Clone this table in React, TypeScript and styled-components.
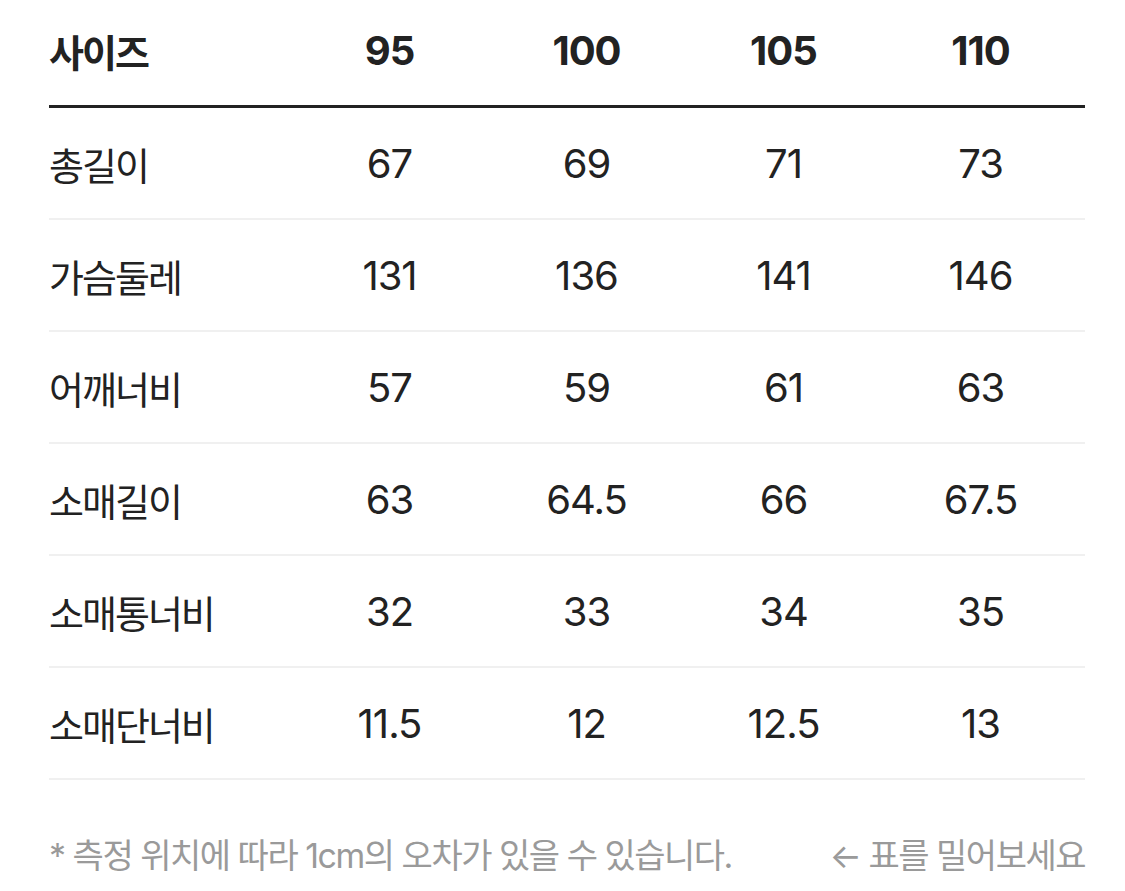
import styled, { createGlobalStyle } from 'styled-components';

const GlobalStyle = createGlobalStyle`
	html, body {
		margin: 0;
		padding: 0;
		background: #ffffff;
	}
	body {
		font-family: Inter, "Noto Sans CJK KR", sans-serif;
		color: #222222;
	}
`;

const SIZES = ['95', '100', '105', '110'];

const ROWS: { label: string; values: string[] }[] = [
	{ label: '총길이', values: ['67', '69', '71', '73'] },
	{ label: '가슴둘레', values: ['131', '136', '141', '146'] },
	{ label: '어깨너비', values: ['57', '59', '61', '63'] },
	{ label: '소매길이', values: ['63', '64.5', '66', '67.5'] },
	{ label: '소매통너비', values: ['32', '33', '34', '35'] },
	{ label: '소매단너비', values: ['11.5', '12', '12.5', '13'] },
];

const StyledSizeTable = styled.div`
	width: 1036px;
	padding: 0 40px 0 49px;
`;

const Row = styled.div<{ $head?: boolean }>`
	display: grid;
	grid-template-columns: 242px repeat(4, 197px);
	align-items: center;
	box-sizing: border-box;
	height: ${(p) => (p.$head ? '108px' : '112px')};
	padding-bottom: ${(p) => (p.$head ? '5px' : '0')};
	border-bottom: ${(p) => (p.$head ? '3px solid #222222' : '2px solid #f0f0f0')};
	font-weight: ${(p) => (p.$head ? 700 : 400)};
`;

const Label = styled.div`
	font-size: 38px;
	letter-spacing: -2px;
	white-space: nowrap;
`;

const Cell = styled.div`
	font-size: 40px;
	letter-spacing: -1px;
	text-align: center;
`;

const Footer = styled.div`
	display: flex;
	justify-content: space-between;
	align-items: center;
	height: 146px;
	font-size: 34px;
	letter-spacing: -1.5px;
	color: #9a9a9a;
	white-space: nowrap;
`;

export default function App() {
	return (
		<>
			<GlobalStyle />
			<StyledSizeTable>
				<Row $head>
					<Label>사이즈</Label>
					{SIZES.map((s) => (
						<Cell key={s}>{s}</Cell>
					))}
				</Row>

				{ROWS.map((row) => (
					<Row key={row.label}>
						<Label>{row.label}</Label>
						{row.values.map((v, i) => (
							<Cell key={i}>{v}</Cell>
						))}
					</Row>
				))}

				<Footer>
					<span>* 측정 위치에 따라 1cm의 오차가 있을 수 있습니다.</span>
					<span>← 표를 밀어보세요</span>
				</Footer>
			</StyledSizeTable>
		</>
	);
}
